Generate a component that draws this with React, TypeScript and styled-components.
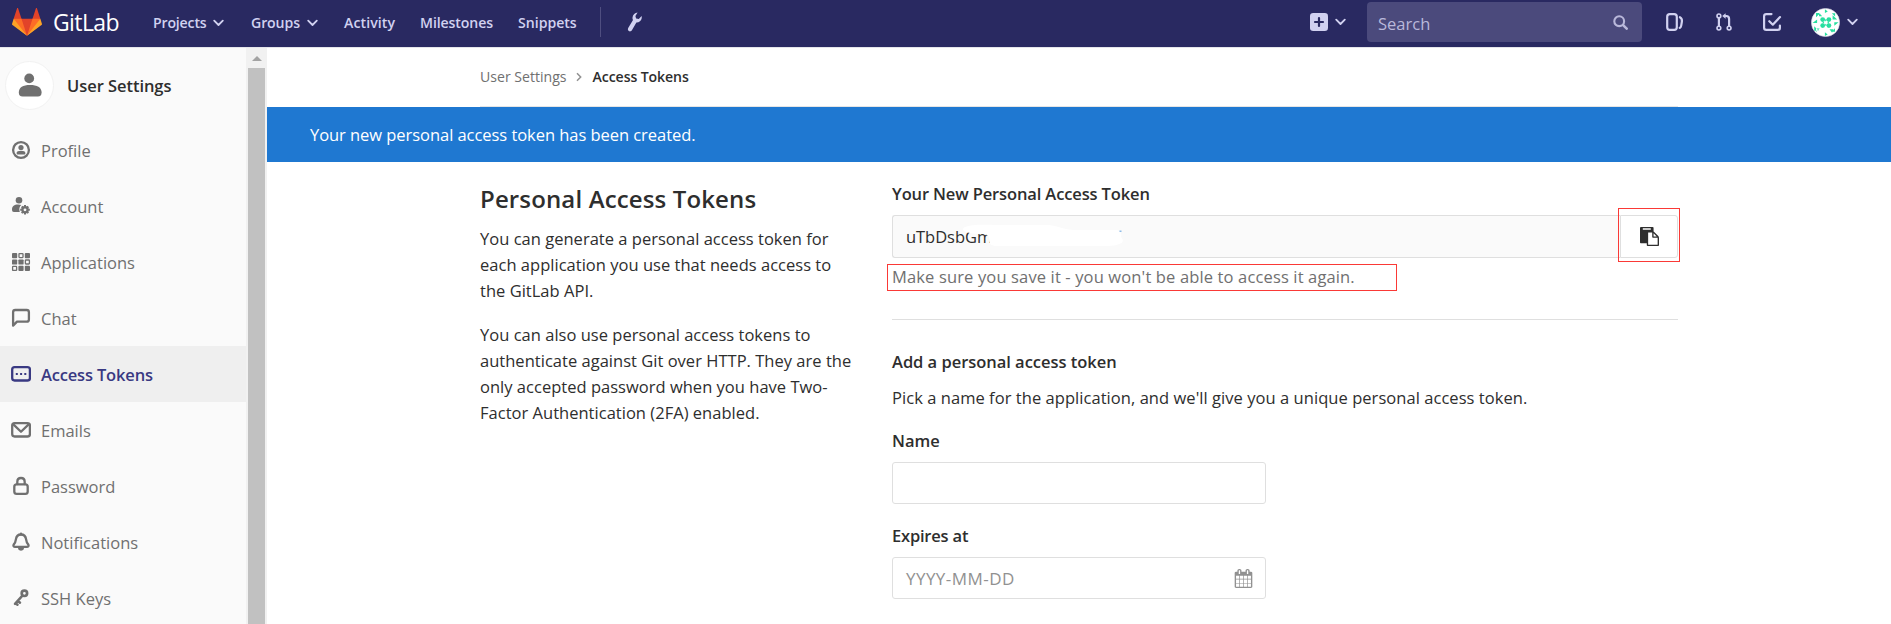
import React from "react";
import styled, { createGlobalStyle } from "styled-components";

const color = {
  nav: "#292961",
  navText: "#d1d1f0",
  text: "#2e2e2e",
  muted: "#707070",
  active: "#393982",
  border: "#dfdfdf",
  alert: "#1f78d1",
  mark: "#fa3936",
};

const GlobalStyle = createGlobalStyle`
  * { box-sizing: border-box; }
  body {
    margin: 0;
    background: #fff;
    color: ${color.text};
    font-family: "Open Sans", "Noto Sans", sans-serif;
    font-size: 16.5px;
    line-height: 26px;
    overflow: hidden;
  }
`;

const Page = styled.div`
  display: flex;
  flex-direction: column;
  height: 624px;
  overflow: hidden;
`;

/* ---------- top bar ---------- */

const Navbar = styled.header`
  display: flex;
  align-items: center;
  flex: none;
  height: 48px;
  padding-left: 12px;
  background: ${color.nav};
  border-bottom: 1px solid #e4e4ea;
  color: ${color.navText};
`;

const Brand = styled.a`
  display: flex;
  align-items: center;
  width: 141px;
  gap: 11px;
  color: #fff;
  font-size: 23px;
  line-height: 30px;
  letter-spacing: -0.6px;
  svg { margin-top: -4px; }
  span { margin-top: -3px; }
`;

const NavLinks = styled.nav`
  display: grid;
  grid-template-columns: 98px 93px 76px 98px 82px;
  align-items: center;
  height: 47px;
`;

const NavLink = styled.a<{ $track?: number }>`
  display: flex;
  align-items: center;
  gap: 7px;
  font-size: 14.1px;
  font-weight: 600;
  line-height: 20px;
  letter-spacing: ${(p) => p.$track ?? 0}px;
  margin-top: -1px;
  white-space: nowrap;
`;

const NavDivider = styled.div`
  width: 1px;
  height: 30px;
  margin: -3px 26px 0 0;
  background: #4f4e80;
`;

const WrenchLink = styled.a`
  display: flex;
  margin-top: -3px;
`;

const NavRight = styled.div`
  display: flex;
  align-items: center;
  height: 47px;
  margin-left: auto;
  padding-right: 33px;
`;

const NavButton = styled.a<{ $gap: number }>`
  display: flex;
  align-items: center;
  gap: 7px;
  margin-right: ${(p) => p.$gap}px;
  margin-top: -3px;
`;

const SearchBox = styled.div`
  display: flex;
  align-items: center;
  justify-content: space-between;
  width: 275px;
  height: 40px;
  margin: -3px 24px 0 0;
  padding: 3px 14px 0 11px;
  border-radius: 4px;
  background: #4b4a7c;
  color: #b9b8da;
  svg { margin-top: -3px; }
`;

/* ---------- sidebar ---------- */

const Body = styled.div`
  display: flex;
  flex: 1;
  min-height: 0;
`;

const Sidebar = styled.aside`
  flex: none;
  width: 246px;
  background: #fafafa;
  overflow: hidden;
`;

const SidebarHeader = styled.div`
  display: flex;
  align-items: center;
  gap: 13px;
  height: 74px;
  padding-left: 5px;
  font-weight: 600;
  letter-spacing: -0.05px;
  b { font-weight: 600; padding-top: 2px; }
`;

const HeaderAvatar = styled.div`
  display: flex;
  align-items: center;
  justify-content: center;
  width: 49px;
  height: 49px;
  border: 1px solid #f2f2f2;
  border-radius: 50%;
  background: #fff;
  color: ${color.muted};
`;

const SidebarItem = styled.a<{ $active?: boolean }>`
  display: flex;
  align-items: center;
  height: 56px;
  padding-left: 11px;
  gap: 10px;
  color: ${(p) => (p.$active ? color.active : color.muted)};
  background: ${(p) => (p.$active ? "#efefef" : "transparent")};
  font-weight: ${(p) => (p.$active ? 600 : 400)};
  letter-spacing: ${(p) => (p.$active ? -0.17 : 0)}px;
  span { padding-top: 1px; }
`;

const ScrollTrack = styled.div`
  display: flex;
  flex-direction: column;
  align-items: center;
  flex: none;
  width: 21px;
  padding: 8px 0 0;
  background: #f1f1f1;
`;

const ScrollArrow = styled.div`
  flex: none;
  margin-bottom: 7px;
  border: 5px solid transparent;
  border-top: 0;
  border-bottom-color: #a3a3a3;
`;

const ScrollThumb = styled.div`
  flex: 1;
  width: 17px;
  background: #c1c1c1;
`;

/* ---------- content ---------- */

const Main = styled.main`
  flex: 1;
  min-width: 0;
`;

const Breadcrumbs = styled.div`
  display: flex;
  align-items: center;
  width: 1198px;
  height: 59px;
  margin: 0 auto;
  border-bottom: 1px solid #e5e5e5;
  font-size: 14.1px;
  line-height: 20px;
  color: ${color.muted};
  svg { margin: 0 11px 0 9px; }
  strong { font-weight: 600; color: ${color.text}; letter-spacing: -0.1px; }
`;

const Alert = styled.div`
  height: 55px;
  padding-left: 43px;
  background: ${color.alert};
  color: #fff;
  line-height: 55px;
  letter-spacing: -0.05px;
`;

const Columns = styled.div`
  display: grid;
  grid-template-columns: 377px 786px;
  column-gap: 35px;
  width: 1198px;
  margin: 0 auto;
`;

const Intro = styled.section`
  padding-top: 21px;
`;

const Title = styled.h4`
  margin: 0 0 11px;
  font-size: 24px;
  font-weight: 600;
  line-height: 32px;
  letter-spacing: 0.14px;
`;

const Paragraph = styled.p`
  margin: 0 0 18px;
  letter-spacing: 0.02px;
`;

const Form = styled.section`
  padding-top: 19px;
`;

const Label = styled.label<{ $top?: number; $track?: number }>`
  display: block;
  margin: ${(p) => p.$top ?? 0}px 0 8px;
  font-weight: 600;
  letter-spacing: ${(p) => p.$track ?? 0}px;
`;

const TokenGroup = styled.div`
  display: flex;
  height: 43px;
`;

const TokenField = styled.div`
  display: flex;
  align-items: center;
  position: relative;
  flex: 1;
  padding: 1px 0 0 13px;
  border: 1px solid ${color.border};
  border-right: 0;
  border-radius: 3px 0 0 3px;
  background: #fafafa;
  letter-spacing: -0.05px;
  svg { position: absolute; left: 70px; top: 8px; }
`;

const CopyButton = styled.button`
  display: flex;
  align-items: center;
  justify-content: center;
  position: relative;
  width: 58px;
  padding: 0;
  border: 1px solid ${color.border};
  border-radius: 0 3px 3px 0;
  background: #fff;
  color: ${color.text};
  &::after {
    content: "";
    position: absolute;
    inset: -8px -3px -5px -3px;
    border: 1px solid ${color.mark};
  }
`;

const HelpText = styled.p`
  position: relative;
  margin: 6px 0 29px;
  color: ${color.muted};
  letter-spacing: 0.14px;
  &::after {
    content: "";
    position: absolute;
    left: -5px;
    top: 0;
    width: 508px;
    height: 25px;
    border: 1px solid ${color.mark};
  }
`;

const Rule = styled.hr`
  height: 1px;
  margin: 0;
  border: 0;
  background: ${color.border};
`;

const Subtitle = styled.h5`
  margin: 29px 0 10px;
  font-size: inherit;
  font-weight: 600;
  letter-spacing: -0.03px;
`;

const Hint = styled.p`
  margin: 0;
  letter-spacing: 0.05px;
`;

const Field = styled.div`
  display: flex;
  align-items: center;
  justify-content: space-between;
  width: 374px;
  height: 42px;
  padding: 1px 12px 0 13px;
  border: 1px solid ${color.border};
  border-radius: 3px;
  background: #fff;
  color: #919191;
  font-size: 17px;
  letter-spacing: 0.45px;
  svg { margin-top: -1px; }
`;

/* ---------- icons ---------- */

const Chevron = () => (
  <svg width="11" height="8" viewBox="0 0 11 8" fill="none" stroke="currentColor" strokeWidth="1.8" strokeLinecap="round" strokeLinejoin="round">
    <path d="M1.2 1.6l4.3 4.4 4.3-4.4" />
  </svg>
);

const Tanuki = () => (
  <svg width="30" height="30" viewBox="0 0 36 36">
    <path fill="#e24329" d="M2 14l9.38 9v-9l-4-12.28c-.205-.632-1.176-.632-1.38 0z" />
    <path fill="#e24329" d="M34 14l-9.38 9v-9l4-12.28c.205-.632 1.176-.632 1.38 0z" />
    <path fill="#e24329" d="M18 34.38L3 14h30z" />
    <path fill="#fc6d26" d="M18 34.38L11.38 14H2l4 11z" />
    <path fill="#fc6d26" d="M18 34.38L24.62 14H34l-4 11z" />
    <path fill="#fca326" d="M2 14L.1 20.16c-.18.565 0 1.2.5 1.56L18 34.38z" />
    <path fill="#fca326" d="M34 14l1.9 6.16c.18.565 0 1.2-.5 1.56L18 34.38z" />
  </svg>
);

const Wrench = () => (
  <svg width="16" height="20" viewBox="0 0 16 20" fill="currentColor">
    <path d="M10.600.6C8 .9 5.800 2.800 5.500 5.400c-.1 1 .1 1.900.5 2.700L1.200 16c-.6 1.200-.3 2.500.7 3.100 1.100.6 2.400.2 3-.9l4.500-7.800c2.700.1 4.800-1.600 5.300-4.200.1-.9.1-1.500-.1-2.200l-2.800 3.100-2.700-.7-.7-2.500z" />
  </svg>
);

const PlusSquare = () => (
  <svg width="18" height="18" viewBox="0 0 18 18">
    <rect width="18" height="18" rx="3.2" fill="currentColor" />
    <path d="M9 5v8M5 9h8" stroke={color.nav} strokeWidth="2.2" strokeLinecap="round" />
  </svg>
);

const Search = () => (
  <svg width="15" height="15" viewBox="0 0 15 15" fill="none" stroke="currentColor" strokeLinecap="round">
    <circle cx="6.2" cy="6.2" r="4.9" strokeWidth="2.1" />
    <path d="M10.100 10.100l3.600 3.600" strokeWidth="2.500" />
  </svg>
);

const Issues = () => (
  <svg width="18" height="18" viewBox="0 0 18 18" fill="none" stroke="currentColor" strokeWidth="2.200" strokeLinecap="round">
    <rect x="1.200" y="1.100" width="9.600" height="15.800" rx="2.600" />
    <path d="M13.900 4.200c1.900 1 2.300 2.300 2 4.300l-.7 4.100c-.2 1.200-.6 1.900-1.500 2.300" />
  </svg>
);

const MergeRequest = () => (
  <svg width="16" height="18" viewBox="0 0 16 18" fill="none" stroke="currentColor" strokeWidth="1.600">
    <circle cx="2.900" cy="2.900" r="1.900" />
    <circle cx="2.900" cy="15.100" r="1.900" />
    <circle cx="13.100" cy="15.100" r="1.900" />
    <path d="M2.900 4.800v8.400M13.100 13.200V6c0-2-.9-3-2.900-3H8.500" strokeWidth="2.200" />
    <path d="M9.600.2v5.600L6.200 3z" fill="currentColor" stroke="none" />
  </svg>
);

const Todo = () => (
  <svg width="19" height="18" viewBox="0 0 19 18" fill="none" stroke="currentColor" strokeWidth="2.200" strokeLinecap="round" strokeLinejoin="round">
    <path d="M8.500 1.100H3.300c-1.500 0-2.200.7-2.200 2.200v11.400c0 1.500.7 2.200 2.200 2.200h11.400c1.500 0 2.200-.7 2.200-2.200v-2.200" />
    <path d="M6.300 8.200l3.500 3.500 7.200-7.600" />
  </svg>
);

const Identicon = () => (
  <svg width="29" height="29" viewBox="0 0 29 29">
    <circle cx="14.500" cy="14.500" r="14.100" fill="#fff" stroke="#d8d8e6" strokeWidth=".6" />
    <g fill="#27dfa0">
      <circle cx="11.700" cy="11.600" r="2.400" />
      <circle cx="17.900" cy="11.600" r="2.400" />
      <circle cx="11.700" cy="17.600" r="2.400" />
      <circle cx="17.900" cy="17.600" r="2.400" />
      <path d="M13.500 11.600h2.600l-1.300 1.800zM13.500 17.600h2.600l-1.300-1.800zM11.700 13.300v2.600l1.600-1.300zM17.900 13.300v2.600l-1.600-1.300z" />
      <path d="M5 5h4.300L5 9.300zM8 4.700v3.600h3.200zM13.900 1.200v3.900l2.900-1.600zM20.800 5.200h3.300v3.300zM21.600 7.200v4.300h4.600zM1.500 14.900l4.600-3.300v3.300zM3.200 18.300v4.400h4.600zM5 20.500h3.700L5 24zM13.900 24.200v3.900l2.800-1.500zM18.500 21.200h3.900l-1.300 3.600zM24 20.200v3.600h-3.300zM23.300 14.300h4.300l-4.300 3.500z" />
    </g>
  </svg>
);

const UserLarge = () => (
  <svg width="24" height="24" viewBox="0 0 24 24" fill="currentColor">
    <circle cx="11.200" cy="5.400" r="4.900" />
    <path d="M.8 19.400C.8 14.400 5 12 12 12s11.600 2.400 11.600 7.400c0 2.700-1.200 4-3.700 4H4.600C2 23.400.8 22.100.8 19.400z" />
  </svg>
);

const MenuIcon = ({ children }: { children: React.ReactNode }) => (
  <svg width="20" height="20" viewBox="0 0 20 20" fill="none" stroke="currentColor" strokeWidth="2.300" strokeLinecap="round" strokeLinejoin="round">
    {children}
  </svg>
);

const icons = {
  profile: (
    <MenuIcon>
      <circle cx="10" cy="10" r="7.900" />
      <g fill="currentColor" stroke="none">
        <circle cx="10" cy="7.500" r="2.600" />
        <path d="M5.600 12.900c0-1.500 1.700-2.200 4.400-2.200s4.400.7 4.400 2.200c0 1-.5 1.500-1.500 1.500H7.100c-1 0-1.500-.5-1.500-1.500z" />
      </g>
    </MenuIcon>
  ),
  account: (
    <MenuIcon>
      <g fill="currentColor" stroke="none">
        <circle cx="8" cy="4.300" r="3.300" />
        <path d="M1 13.600c0-3.400 2.200-5 6.100-5 1.300 0 2.300.2 3.200.5-1.900 1.500-2.500 4-1.500 7H2.900C1.600 16.100 1 15.300 1 13.600z" />
      </g>
      <circle cx="14" cy="13.800" r="2.600" strokeWidth="2.400" />
      <path d="M14 9v1.600M14 17v1.600M9.200 13.800h1.600M17.200 13.800h1.600M10.700 10.500l1 1M16.300 16.100l1 1M17.300 10.500l-1 1M11.700 16.100l-1 1" strokeWidth="2" strokeLinecap="butt" />
    </MenuIcon>
  ),
  applications: (
    <MenuIcon>
      <g fill="currentColor" stroke="none">
        <rect x="1" y="1" width="5.200" height="5.200" rx=".9" />
        <rect x="13.800" y="1" width="5.200" height="5.200" rx=".9" />
        <rect x="1" y="7.400" width="5.200" height="5.200" rx=".9" />
        <rect x="7.400" y="7.400" width="5.200" height="5.200" rx=".9" />
        <rect x="7.400" y="13.800" width="5.200" height="5.200" rx=".9" />
        <rect x="13.800" y="13.800" width="5.200" height="5.200" rx=".9" />
      </g>
      <g strokeWidth="1.300">
        <rect x="8" y="1.600" width="4" height="4" rx=".5" />
        <rect x="14.400" y="8" width="4" height="4" rx=".5" />
        <rect x="1.600" y="14.400" width="4" height="4" rx=".5" />
      </g>
    </MenuIcon>
  ),
  chat: (
    <MenuIcon>
      <path d="M2.100 17.600V4.200c0-1.400.8-2.200 2.200-2.200h11.400c1.400 0 2.200.8 2.200 2.200v7.200c0 1.400-.8 2.200-2.200 2.200H6z" />
    </MenuIcon>
  ),
  token: (
    <MenuIcon>
      <rect x="1.200" y="3.200" width="17.700" height="13.300" rx="2.400" />
      <path d="M4.800 8.900h2v2h-2zM9.100 8.900h2v2h-2zM13.300 8.900h2v2h-2z" fill="currentColor" stroke="none" />
    </MenuIcon>
  ),
  emails: (
    <MenuIcon>
      <rect x="1.200" y="3.200" width="17.700" height="13.300" rx="2.400" />
      <path d="M2.600 4.600l7.400 7.200 7.400-7.200" />
    </MenuIcon>
  ),
  password: (
    <MenuIcon>
      <rect x="3.300" y="8.300" width="13.400" height="9.500" rx="2.400" />
      <path d="M6.300 8V5.900c0-2.300 1.500-3.900 3.700-3.900s3.700 1.600 3.700 3.900V8" />
    </MenuIcon>
  ),
  bell: (
    <MenuIcon>
      <path d="M10 2.500c-3 0-4.700 1.900-5.100 4.800-.3 2.200-.8 3.500-2 5-.9 1.200-.6 2.500.9 2.500h12.400c1.500 0 1.800-1.300.9-2.500-1.200-1.500-1.700-2.800-2-5C14.700 4.400 13 2.500 10 2.500z" />
      <path d="M10 1.600v1M8.200 16.600c.7 1.200 2.900 1.200 3.600 0z" fill="currentColor" />
    </MenuIcon>
  ),
  key: (
    <MenuIcon>
      <circle cx="13.400" cy="5.300" r="2.700" strokeWidth="2.700" />
      <path d="M11.200 7.900l-7.200 7.900M7 12.900l2 1.800M4.800 15.200l1.700 1.500" strokeWidth="2.500" />
    </MenuIcon>
  ),
};

const Paste = () => (
  <svg width="19" height="19" viewBox="0 0 1792 1792" fill="currentColor">
    <path d="M768 1664h896v-640h-416q-40 0-68-28t-28-68v-416h-384v1152zm256-1440v-64q0-13-9.500-22.500t-22.500-9.500h-704q-13 0-22.500 9.500t-9.500 22.500v64q0 13 9.500 22.500t22.500 9.500h704q13 0 22.500-9.500t9.500-22.500zm256 672h299l-299-299v299zm512 128v672q0 40-28 68t-68 28h-960q-40 0-68-28t-28-68v-160h-544q-40 0-68-28t-28-68v-1344q0-40 28-68t68-28h1088q40 0 68 28t28 68v328q21 13 36 28l408 408q28 28 48 76t20 88z" />
  </svg>
);

const Calendar = () => (
  <svg width="19" height="19" viewBox="0 0 1792 1792" fill="currentColor">
    <path d="M192 1664h288v-288h-288v288zm352 0h320v-288h-320v288zm-352-352h288v-320h-288v320zm352 0h320v-320h-320v320zm-352-384h288v-288h-288v288zm736 736h320v-288h-320v288zm-384-736h320v-288h-320v288zm768 736h288v-288h-288v288zm-384-352h320v-320h-320v320zm-352-864v-288q0-13-9.500-22.500t-22.500-9.500h-64q-13 0-22.500 9.500t-9.500 22.500v288q0 13 9.500 22.500t22.500 9.500h64q13 0 22.500-9.500t9.500-22.500zm736 864h288v-320h-288v320zm-384-384h320v-288h-320v288zm384 0h288v-288h-288v288zm32-480v-288q0-13-9.500-22.500t-22.500-9.500h-64q-13 0-22.500 9.500t-9.500 22.500v288q0 13 9.500 22.500t22.500 9.500h64q13 0 22.500-9.500t9.500-22.500zm384-64v1280q0 52-38 90t-90 38h-1408q-52 0-90-38t-38-90v-1280q0-52 38-90t90-38h128v-96q0-66 47-113t113-47h64q66 0 113 47t47 113v96h384v-96q0-66 47-113t113-47h64q66 0 113 47t47 113v96h128q52 0 90 38t38 90z" />
  </svg>
);

const BreadcrumbArrow = () => (
  <svg width="6" height="10" viewBox="0 0 6 10" fill="none" stroke="#919191" strokeWidth="1.500">
    <path d="M1 1.200L4.700 5 1 8.800" />
  </svg>
);

/* White brush stroke hiding the rest of the token. */
const Redaction = () => (
  <svg width="164" height="25" viewBox="0 0 164 25">
    <path fill="#fff" d="M2 3C10 0 22 1 34 1h52c8 1 14 4 24 5h44c4 1 5 4 4 7 3 3 2 6-2 7-4 2-10 2-16 2H34c-6 0-8-2-8-7 0-4-3-5-7-5-8 0-15-1-18-3-2-2-1-3 1-4z" />
    <path fill="#8fbce8" d="M156.500 6.500h2v1.500h-2z" />
  </svg>
);

const menu: { label: string; icon: React.ReactNode; active?: boolean }[] = [
  { label: "Profile", icon: icons.profile },
  { label: "Account", icon: icons.account },
  { label: "Applications", icon: icons.applications },
  { label: "Chat", icon: icons.chat },
  { label: "Access Tokens", icon: icons.token, active: true },
  { label: "Emails", icon: icons.emails },
  { label: "Password", icon: icons.password },
  { label: "Notifications", icon: icons.bell },
  { label: "SSH Keys", icon: icons.key },
];

export default function App() {
  return (
    <Page>
      <GlobalStyle />
      <Navbar>
        <Brand>
          <Tanuki />
          <span>GitLab</span>
        </Brand>
        <NavLinks>
          <NavLink $track={-0.17}>Projects <Chevron /></NavLink>
          <NavLink $track={-0.1}>Groups <Chevron /></NavLink>
          <NavLink $track={0.08}>Activity</NavLink>
          <NavLink $track={-0.1}>Milestones</NavLink>
          <NavLink>Snippets</NavLink>
        </NavLinks>
        <NavDivider />
        <WrenchLink><Wrench /></WrenchLink>
        <NavRight>
          <NavButton $gap={21}><PlusSquare /><Chevron /></NavButton>
          <SearchBox>Search<Search /></SearchBox>
          <NavButton $gap={32}><Issues /></NavButton>
          <NavButton $gap={31}><MergeRequest /></NavButton>
          <NavButton $gap={29}><Todo /></NavButton>
          <NavButton $gap={0}><Identicon /><Chevron /></NavButton>
        </NavRight>
      </Navbar>
      <Body>
        <Sidebar>
          <SidebarHeader>
            <HeaderAvatar><UserLarge /></HeaderAvatar>
            <b>User Settings</b>
          </SidebarHeader>
          {menu.map((m) => (
            <SidebarItem key={m.label} $active={m.active}>
              {m.icon}
              <span>{m.label}</span>
            </SidebarItem>
          ))}
        </Sidebar>
        <ScrollTrack>
          <ScrollArrow />
          <ScrollThumb />
        </ScrollTrack>
        <Main>
          <Breadcrumbs>
            <span>User Settings</span>
            <BreadcrumbArrow />
            <strong>Access Tokens</strong>
          </Breadcrumbs>
          <Alert>Your new personal access token has been created.</Alert>
          <Columns>
            <Intro>
              <Title>Personal Access Tokens</Title>
              <Paragraph>
                You can generate a personal access token for each application you use that needs access to the GitLab API.
              </Paragraph>
              <Paragraph>
                You can also use personal access tokens to authenticate against Git over HTTP. They are the only accepted
                password when you have Two-Factor Authentication (2FA) enabled.
              </Paragraph>
            </Intro>
            <Form>
              <Label $track={-0.13}>Your New Personal Access Token</Label>
              <TokenGroup>
                <TokenField>
                  uTbDsbGm
                  <Redaction />
                </TokenField>
                <CopyButton><Paste /></CopyButton>
              </TokenGroup>
              <HelpText>Make sure you save it - you won't be able to access it again.</HelpText>
              <Rule />
              <Subtitle>Add a personal access token</Subtitle>
              <Hint>Pick a name for the application, and we'll give you a unique personal access token.</Hint>
              <Label $top={17}>Name</Label>
              <Field />
              <Label $top={19} $track={-0.2}>Expires at</Label>
              <Field>YYYY-MM-DD<Calendar /></Field>
            </Form>
          </Columns>
        </Main>
      </Body>
    </Page>
  );
}
